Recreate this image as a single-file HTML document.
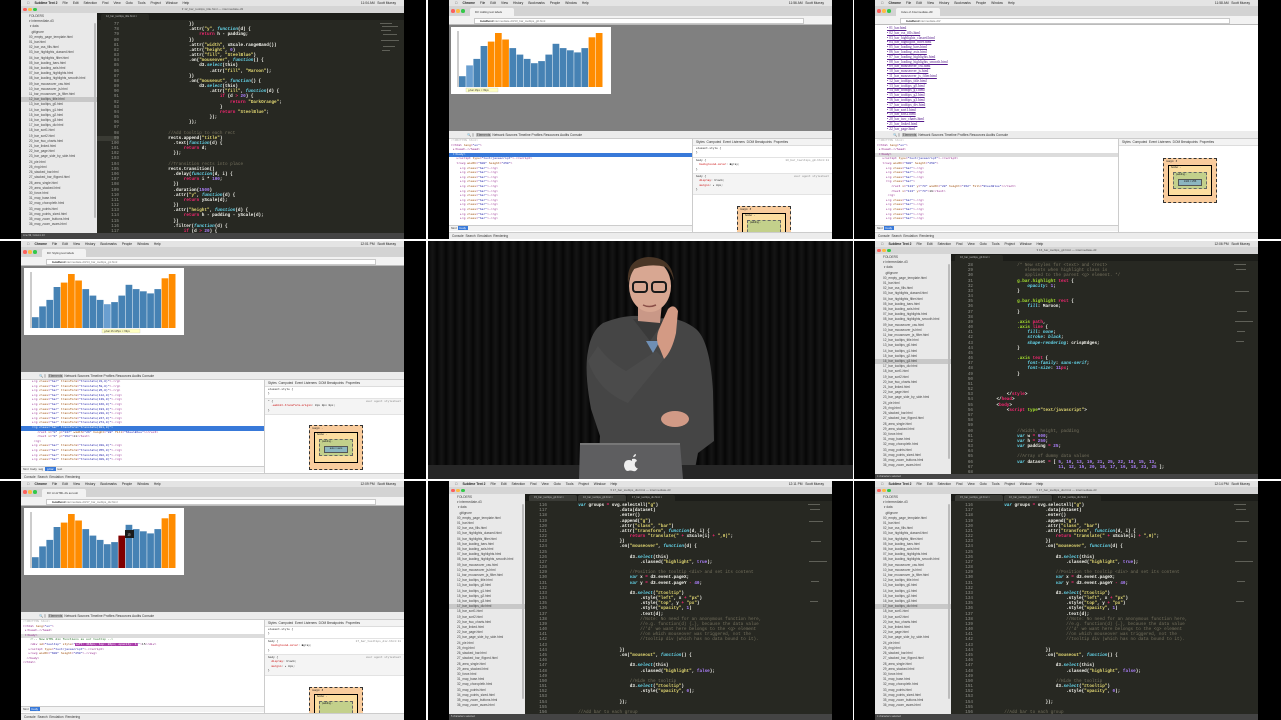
<!DOCTYPE html>
<html><head><meta charset="utf-8">
<style>
*{margin:0;padding:0;box-sizing:border-box}
body{width:1281px;height:720px;background:#fff;position:relative;overflow:hidden;font-family:"Liberation Sans",sans-serif}
.cell{position:absolute;background:#000;overflow:hidden}
.scr{position:absolute;left:21px;top:0;width:383px;height:239px;overflow:hidden}
.mb{position:absolute;left:0;top:0;width:100%;height:6px;background:#e4e4e4;font-size:3.3px;color:#222;line-height:6px;padding-left:6px;white-space:nowrap}
.mb b{margin-right:5px}
.mb span{margin-right:5px}
.mb i{position:absolute;right:8px;font-style:normal}
.tl{position:absolute;top:7.5px;width:3.6px;height:3.6px;border-radius:50%}
/* sublime */
.st{position:absolute;left:0;top:6px;width:100%;height:7px;background:#d5d5d5;font-size:3px;color:#555;text-align:center;line-height:7px}
.sb{position:absolute;left:0;top:13px;width:76px;height:220px;background:#e9e9e9;font-size:3.2px;color:#444;line-height:5.2px;padding-left:8px;white-space:nowrap;padding-top:1px}
.sb .sel{background:#c8c8c8;margin-left:-8px;padding-left:8px}
.sb .scb{position:absolute;right:1px;top:10px;width:2px;height:195px;background:#bbb;border-radius:1px}
.ed{position:absolute;left:76px;top:13px;width:307px;height:220px;background:#272822}
.tabs{position:absolute;left:0;top:0;width:100%;height:7px;background:#1c1d19}
.tab{position:absolute;top:1px;height:6px;width:48px;background:#3a3b36;border-radius:2px 2px 0 0;font-size:2.6px;color:#bbb;line-height:6px;padding-left:5px}
.tab.a{background:#272822}
.code{position:absolute;left:0;top:9px;width:100%;font-family:"Liberation Mono",monospace;font-size:4.3px;line-height:5.17px;color:#f8f8f2;white-space:pre;font-weight:bold}
.code .n{display:inline-block;width:22px;text-align:right;color:#8f908a;font-weight:normal;margin-right:8px}
.hl{background:#3a3b34}
.k{color:#f92672}.s{color:#e6db74}.f{color:#66d9ef;font-style:italic}.m{color:#ae81ff}.c{color:#75715e;font-weight:normal}.g{color:#a6e22e}
.mm{position:absolute;right:0;top:7px;width:26px;height:213px}
.mm div{position:absolute;height:1px;background:#77786f;opacity:.7}
.stb{position:absolute;left:0;top:233px;width:100%;height:6px;background:#444;font-size:2.5px;color:#ccc;line-height:6px;padding-left:2px}
/* chrome */
.ct{position:absolute;left:0;top:6px;width:100%;height:10px;background:#d3d3d3}
.ctab{position:absolute;left:21px;top:2px;height:8px;width:44px;background:#f2f2f2;border-radius:2px 2px 0 0;font-size:2.8px;color:#333;line-height:8px;padding-left:5px}
.ab{position:absolute;left:0;top:16px;width:100%;height:9px;background:#f2f2f2;border-bottom:1px solid #bbb}
.url{position:absolute;left:25px;top:1.5px;width:330px;height:6px;background:#fff;border:1px solid #c9c9c9;font-size:2.9px;line-height:5px;padding-left:5px;color:#777}
.url b{color:#222}
.pg{position:absolute;left:0;top:25px;width:100%;height:106px;background:#808080}
.chart{position:absolute;left:2px;top:2px;width:160px;height:67px;background:#fff}
.dt{position:absolute;left:0;top:131px;width:100%;height:108px;background:#fff}
.dtb{position:absolute;left:0;top:0;width:100%;height:8px;background:#ececec;border-bottom:1px solid #ccc;font-size:3.3px;line-height:8px;padding-left:18px;color:#333;white-space:nowrap}
.dtb .e{background:#c9c9c9;padding:0 1px}
.el{position:absolute;left:0;top:8px;width:243px;height:86px;font-family:"Liberation Mono",monospace;font-size:3px;line-height:4.6px;color:#881280;white-space:pre;padding-left:2px;overflow:hidden}
.el .a{color:#994500}.el .v{color:#1a1aa6}.el .t{color:#222}.el .cm{color:#236e25}
.el .sr{background:#3879d9;color:#fff;display:block;margin-left:-2px;padding-left:2px}
.el .gr{background:#dcdcdc;display:block;margin-left:-2px;padding-left:2px}
.sty{position:absolute;left:243px;top:8px;width:140px;height:100px;border-left:1px solid #ccc;font-family:"Liberation Mono",monospace;font-size:2.8px;color:#222;line-height:4.4px}
.stt{height:7px;background:#f3f3f3;border-bottom:1px solid #ddd;font-family:"Liberation Sans",sans-serif;font-size:3.2px;line-height:7px;padding-left:3px;white-space:nowrap;color:#333}
.rule{padding:1px 3px;border-bottom:1px solid #e3e3e3}
.rule.g2{background:#f4f4f4}
.box{position:absolute;left:44px;width:54px;height:45px;background:#f9cc9d;border:1px dashed #333;font-family:"Liberation Sans",sans-serif;font-size:2.5px;line-height:4px;padding:1px 2px}
.box .b2{position:absolute;left:4px;top:6px;right:4px;bottom:6px;background:#fcdd9f;border:1px solid #000;padding:0 2px}
.box .b3{position:absolute;left:4px;top:6px;right:4px;bottom:6px;background:#c3d08b;border:1px dashed #666;padding:0 2px}
.box .b4{position:absolute;left:4px;top:6px;right:4px;height:7px;background:#8cb6c0;border:1px solid #555;text-align:center}
.fis{position:absolute;left:0;bottom:0;width:100%;height:5px;border-top:1px solid #ddd;font-size:2.7px;color:#aaa;padding-left:3px;line-height:5px;font-family:"Liberation Sans",sans-serif;background:#fff}
.bc{position:absolute;left:0;top:94px;width:243px;height:6px;background:#f3f3f3;border-top:1px solid #ccc;font-size:3px;line-height:5px;padding-left:2px;color:#333}
.bc .on{background:#3879d9;color:#fff;padding:0 2px}
.cn{position:absolute;left:0;top:101px;width:100%;height:7px;background:#ececec;border-top:1px solid #ccc;font-size:3.2px;line-height:6px;padding-left:3px;color:#333}
</style></head><body>

<!-- ============ ROW 1 CELL 1: Sublime ============ -->
<div class="cell" style="left:0;top:0;width:426px;height:239px">
<div class="scr">
<div class="mb"><b>&#63743;</b><b>Sublime Text 2</b><span>File</span><span>Edit</span><span>Selection</span><span>Find</span><span>View</span><span>Goto</span><span>Tools</span><span>Project</span><span>Window</span><span>Help</span><i>11:04 AM &nbsp; Scott Murray</i></div>
<div class="st">▾ 12_bar_tooltips_title.html — intermediate-d3</div>
<div class="tl" style="left:2px;background:#fc605c"></div><div class="tl" style="left:7px;background:#fdbc40"></div><div class="tl" style="left:12px;background:#34c84a"></div>
<div class="sb">FOLDERS<br>▾ intermediate-d3<br>&nbsp;▾ data<br>&nbsp;&nbsp;.gitignore<br>00_empty_page_template.html<br>01_bar.html<br>02_bar_css_fills.html<br>03_bar_highlights_classed.html<br>04_bar_highlights_filter.html<br>05_bar_loading_bars.html<br>06_bar_loading_axis.html<br>07_bar_loading_highlights.html<br>08_bar_loading_highlights_smooth.html<br>09_bar_mouseover_css.html<br>10_bar_mouseover_js.html<br>11_bar_mouseover_js_filter.html<br><div class="sel">12_bar_tooltips_title.html</div>13_bar_tooltips_g0.html<br>14_bar_tooltips_g1.html<br>15_bar_tooltips_g2.html<br>16_bar_tooltips_g3.html<br>17_bar_tooltips_div.html<br>18_bar_sort1.html<br>19_bar_sort2.html<br>20_bar_two_charts.html<br>21_bar_linked.html<br>22_bar_page.html<br>23_bar_page_side_by_side.html<br>24_pie.html<br>25_ring.html<br>26_stacked_bar.html<br>27_stacked_bar_flipped.html<br>28_area_single.html<br>29_area_stacked.html<br>30_force.html<br>31_map_base.html<br>32_map_choropleth.html<br>33_map_points.html<br>34_map_points_sized.html<br>35_map_zoom_buttons.html<br>36_map_zoom_avars.html<div class="scb"></div></div>
<div class="ed"><div class="tabs"><div class="tab a" style="left:4px">12_bar_tooltips_title.html ×</div></div>
<div class="code"><span class="n">77</span>                        })
<span class="n">78</span>                        .attr(<span class="s">"y"</span>, <span class="f">function</span>(d) {
<span class="n">79</span>                            <span class="k">return</span> h - padding;
<span class="n">80</span>                        })
<span class="n">81</span>                        .attr(<span class="s">"width"</span>, xScale.rangeBand())
<span class="n">82</span>                        .attr(<span class="s">"height"</span>, <span class="m">0</span>)
<span class="n">83</span>                        .attr(<span class="s">"fill"</span>, <span class="s">"SteelBlue"</span>)
<span class="n">84</span>                        .on(<span class="s">"mouseover"</span>, <span class="f">function</span>() {
<span class="n">85</span>                            d3.<span class="f">select</span>(this)
<span class="n">86</span>                                .attr(<span class="s">"fill"</span>, <span class="s">"Maroon"</span>);
<span class="n">87</span>                        })
<span class="n">88</span>                        .on(<span class="s">"mouseout"</span>, <span class="f">function</span>() {
<span class="n">89</span>                            d3.<span class="f">select</span>(this)
<span class="n">90</span>                                .attr(<span class="s">"fill"</span>, <span class="f">function</span>(d) {
<span class="n">91</span>                                    <span class="k">if</span> (d <span class="k">&gt;</span> <span class="m">20</span>) {
<span class="n">92</span>                                        <span class="k">return</span> <span class="s">"DarkOrange"</span>;
<span class="n">93</span>                                    }
<span class="n">94</span>                                    <span class="k">return</span> <span class="s">"SteelBlue"</span>;
<span class="n">95</span>                                });
<span class="n">96</span>                        });
<span class="n">97</span>
<span class="n">98</span>                <span class="c">//Add tooltip to each rect</span>
<span class="n hl">99</span>                rects.append(<span class="s">"title"</span>)
<span class="n">100</span>                  .text(<span class="f">function</span>(d) {
<span class="n">101</span>                      <span class="k">return</span> d;
<span class="n">102</span>                  });
<span class="n">103</span>
<span class="n">104</span>                <span class="c">//Transition rects into place</span>
<span class="n">105</span>                rects.transition()
<span class="n">106</span>                  .delay(<span class="f">function</span>(d, i) {
<span class="n">107</span>                      <span class="k">return</span> i * <span class="m">100</span>;
<span class="n">108</span>                  })
<span class="n">109</span>                  .duration(<span class="m">1500</span>)
<span class="n">110</span>                  .attr(<span class="s">"y"</span>, <span class="f">function</span>(d) {
<span class="n">111</span>                      <span class="k">return</span> yScale(d);
<span class="n">112</span>                  })
<span class="n">113</span>                  .attr(<span class="s">"height"</span>, <span class="f">function</span>(d) {
<span class="n">114</span>                      <span class="k">return</span> h - padding - yScale(d);
<span class="n">115</span>                  })
<span class="n">116</span>                  .filter(<span class="f">function</span>(d) {
<span class="n">117</span>                      <span class="k">if</span> (d <span class="k">&gt;</span> <span class="m">20</span>) {
<span class="n">118</span>                          <span class="k">return</span> <span class="s">true</span>;</div>
<div class="mm"><div style="top:3px;left:2px;width:12px"></div><div style="top:6px;left:4px;width:16px"></div><div style="top:10px;left:3px;width:10px"></div><div style="top:14px;left:5px;width:14px"></div><div style="top:20px;left:3px;width:18px"></div><div style="top:26px;left:5px;width:12px"></div><div style="top:30px;left:4px;width:8px"></div></div>
</div>
<div class="stb">Line 99, Column 13</div>
</div></div>

<!-- ============ ROW 1 CELL 2: Chrome chart ============ -->
<div class="cell" style="left:428px;top:0;width:425px;height:239px">
<div class="scr">
<div class="mb"><b>&#63743;</b><b>Chrome</b><span>File</span><span>Edit</span><span>View</span><span>History</span><span>Bookmarks</span><span>People</span><span>Window</span><span>Help</span><i>11:56 AM &nbsp; Scott Murray</i></div>
<div class="ct"><div class="ctab">D3: Adding text labels</div></div>
<div class="tl" style="left:2px;top:9px;background:#fc605c"></div><div class="tl" style="left:7px;top:9px;background:#fdbc40"></div><div class="tl" style="left:12px;top:9px;background:#34c84a"></div>
<div class="ab"><div class="url"><b>localhost</b>/intermediate-d3/13_bar_tooltips_g0.html</div></div>
<div class="pg"><div class="chart">
<svg width="160" height="67" viewBox="0 0 160 67"><line x1="7" y1="4" x2="7" y2="60" stroke="#000" stroke-width=".4"/>
<g fill="#4682b4"><rect x="8" y="49.2" width="6.7" height="10.8"/><rect x="15.2" y="38.4" width="6.7" height="21.6" fill="#6a9fd0"/><rect x="22.4" y="31.9" width="6.7" height="28.1"/><rect x="29.6" y="19" width="6.7" height="41"/><rect x="36.8" y="14.6" width="6.7" height="45.4" fill="#ff8c00"/><rect x="44" y="6" width="6.7" height="54" fill="#ff8c00"/><rect x="51.2" y="12.5" width="6.7" height="47.5" fill="#ff8c00"/><rect x="58.4" y="21.1" width="6.7" height="38.9"/><rect x="65.6" y="27.6" width="6.7" height="32.4"/><rect x="72.8" y="31.9" width="6.7" height="28.1"/><rect x="80" y="36.2" width="6.7" height="23.8"/><rect x="87.2" y="34.1" width="6.7" height="25.9"/><rect x="94.4" y="27.6" width="6.7" height="32.4"/><rect x="101.6" y="16.8" width="6.7" height="43.2"/><rect x="108.8" y="21.1" width="6.7" height="38.9"/><rect x="116" y="23.3" width="6.7" height="36.7"/><rect x="123.2" y="25.4" width="6.7" height="34.6"/><rect x="130.4" y="21.1" width="6.7" height="38.9"/><rect x="137.6" y="10.3" width="6.7" height="49.7" fill="#ff8c00"/><rect x="144.8" y="6" width="6.7" height="54" fill="#ff8c00"/></g>
<rect x="15" y="61" width="32" height="4" fill="#ffffc0" stroke="#bbb" stroke-width=".3"/><text x="17" y="64" font-size="2.6" fill="#333">g.bar 26px × 99px</text></svg>
</div></div>
<div class="dt"><div class="dtb">🔍 ▯ &nbsp;<span class="e">Elements</span> Network Sources Timeline Profiles Resources Audits Console</div>
<div class="el"><span style="color:#aaa">&lt;!DOCTYPE html&gt;</span>
▾&lt;html <span class="a">lang</span>=<span class="v">"en"</span>&gt;
 ▸&lt;head&gt;…&lt;/head&gt;
<span class="sr"> ▾&lt;body&gt;</span>   ▸&lt;script <span class="a">type</span>=<span class="v">"text/javascript"</span>&gt;…&lt;/script&gt;
   ▾&lt;svg <span class="a">width</span>=<span class="v">"600"</span> <span class="a">height</span>=<span class="v">"250"</span>&gt;
     ▸&lt;g <span class="a">class</span>=<span class="v">"bar"</span>&gt;…&lt;/g&gt;
     ▸&lt;g <span class="a">class</span>=<span class="v">"bar"</span>&gt;…&lt;/g&gt;
     ▸&lt;g <span class="a">class</span>=<span class="v">"bar"</span>&gt;…&lt;/g&gt;
     ▸&lt;g <span class="a">class</span>=<span class="v">"bar"</span>&gt;…&lt;/g&gt;
     ▸&lt;g <span class="a">class</span>=<span class="v">"bar"</span>&gt;…&lt;/g&gt;
     ▸&lt;g <span class="a">class</span>=<span class="v">"bar"</span>&gt;…&lt;/g&gt;
     ▸&lt;g <span class="a">class</span>=<span class="v">"bar"</span>&gt;…&lt;/g&gt;
     ▸&lt;g <span class="a">class</span>=<span class="v">"bar"</span>&gt;…&lt;/g&gt;
     ▸&lt;g <span class="a">class</span>=<span class="v">"bar"</span>&gt;…&lt;/g&gt;
     ▸&lt;g <span class="a">class</span>=<span class="v">"bar"</span>&gt;…&lt;/g&gt;
     ▸&lt;g <span class="a">class</span>=<span class="v">"bar"</span>&gt;…&lt;/g&gt;
     ▸&lt;g <span class="a">class</span>=<span class="v">"bar"</span>&gt;…&lt;/g&gt;</div>
<div class="bc">html <span class="on">body</span></div>
<div class="sty"><div class="stt">Styles &nbsp;Computed &nbsp;Event Listeners &nbsp;DOM Breakpoints &nbsp;Properties</div>
<div class="rule">element.style {<br>}</div>
<div class="rule">body { <span style="float:right;color:#888">13_bar_tooltips_g0.html:11</span><br>&nbsp; <span style="color:#c80000">background-color</span>: ■gray;<br>}</div>
<div class="rule g2">body { <span style="float:right;color:#888">user agent stylesheet</span><br>&nbsp; <span style="color:#c80000">display</span>: block;<br>&nbsp; <span style="color:#c80000">margin</span>: ▸ 8px;<br>}</div>
<div class="box" style="top:67px">margin &nbsp; 8<div class="b2">border &nbsp; -<div class="b3">padding -</div></div></div>
<div class="fis">Find in Styles</div></div>
<div class="cn">Console &nbsp;Search &nbsp;Emulation &nbsp;Rendering</div>
</div></div></div>

<!-- ============ ROW 1 CELL 3: Chrome index ============ -->
<div class="cell" style="left:854px;top:0;width:427px;height:239px">
<div class="scr">
<div class="mb"><b>&#63743;</b><b>Chrome</b><span>File</span><span>Edit</span><span>View</span><span>History</span><span>Bookmarks</span><span>People</span><span>Window</span><span>Help</span><i>11:58 AM &nbsp; Scott Murray</i></div>
<div class="ct"><div class="ctab">Index of /intermediate-d3/</div></div>
<div class="tl" style="left:2px;top:9px;background:#fc605c"></div><div class="tl" style="left:7px;top:9px;background:#fdbc40"></div><div class="tl" style="left:12px;top:9px;background:#34c84a"></div>
<div class="ab"><div class="url"><b>localhost</b>/intermediate-d3/</div></div>
<div class="pg" style="background:#fff;font-family:'Liberation Serif',serif;font-size:3.6px;line-height:4.8px;color:#551a8b;padding:1px 0 0 12px">
<div style="text-decoration:underline">• 01_bar.html<br>• 02_bar_css_fills.html<br>• 03_bar_highlights_classed.html<br>• 04_bar_highlights_filter.html<br>• 05_bar_loading_bars.html<br>• 06_bar_loading_axis.html<br>• 07_bar_loading_highlights.html<br>• 08_bar_loading_highlights_smooth.html<br>• 09_bar_mouseover_css.html<br>• 10_bar_mouseover_js.html<br>• 11_bar_mouseover_js_filter.html<br>• 12_bar_tooltips_title.html<br>• 13_bar_tooltips_g0.html<br>• 14_bar_tooltips_g1.html<br>• 15_bar_tooltips_g2.html<br>• 16_bar_tooltips_g3.html<br>• 17_bar_tooltips_div.html<br>• 18_bar_sort1.html<br>• 19_bar_sort2.html<br>• 20_bar_two_charts.html<br>• 21_bar_linked.html<br>• 22_bar_page.html</div></div>
<div class="dt"><div class="dtb">🔍 ▯ &nbsp;<span class="e">Elements</span> Network Sources Timeline Profiles Resources Audits Console</div>
<div class="el"><span style="color:#aaa">&lt;!DOCTYPE html&gt;</span>
▾&lt;html <span class="a">lang</span>=<span class="v">"en"</span>&gt;
 ▸&lt;head&gt;…&lt;/head&gt;
<span class="gr"> ▾&lt;body&gt;</span>   ▸&lt;script <span class="a">type</span>=<span class="v">"text/javascript"</span>&gt;…&lt;/script&gt;
   ▾&lt;svg <span class="a">width</span>=<span class="v">"600"</span> <span class="a">height</span>=<span class="v">"250"</span>&gt;
     ▸&lt;g <span class="a">class</span>=<span class="v">"bar"</span>&gt;…&lt;/g&gt;
     ▸&lt;g <span class="a">class</span>=<span class="v">"bar"</span>&gt;…&lt;/g&gt;
     ▸&lt;g <span class="a">class</span>=<span class="v">"bar"</span>&gt;…&lt;/g&gt;
     ▾&lt;g <span class="a">class</span>=<span class="v">"bar"</span>&gt;
        &lt;rect <span class="a">x</span>=<span class="v">"113"</span> <span class="a">y</span>=<span class="v">"73"</span> <span class="a">width</span>=<span class="v">"20"</span> <span class="a">height</span>=<span class="v">"152"</span> <span class="a">fill</span>=<span class="v">"SteelBlue"</span>&gt;&lt;/rect&gt;
        &lt;text <span class="a">x</span>=<span class="v">"113"</span> <span class="a">y</span>=<span class="v">"73"</span>&gt;<span class="t">19</span>&lt;/text&gt;
      &lt;/g&gt;
     ▸&lt;g <span class="a">class</span>=<span class="v">"bar"</span>&gt;…&lt;/g&gt;
     ▸&lt;g <span class="a">class</span>=<span class="v">"bar"</span>&gt;…&lt;/g&gt;
     ▸&lt;g <span class="a">class</span>=<span class="v">"bar"</span>&gt;…&lt;/g&gt;
     ▸&lt;g <span class="a">class</span>=<span class="v">"bar"</span>&gt;…&lt;/g&gt;
     ▸&lt;g <span class="a">class</span>=<span class="v">"bar"</span>&gt;…&lt;/g&gt;</div>
<div class="bc">html <span class="on">body</span></div>
<div class="sty"><div class="stt">Styles &nbsp;Computed &nbsp;Event Listeners &nbsp;DOM Breakpoints &nbsp;Properties</div>
<div class="box" style="top:19px">margin &nbsp; 8<div class="b2">border &nbsp; -<div class="b3">padding -<div class="b4">1424 × 256</div></div></div></div>
<div class="fis">Find in Styles</div></div>
<div class="cn">Console &nbsp;Search &nbsp;Emulation &nbsp;Rendering</div>
</div></div></div>

<!-- ============ ROW 2 CELL 1: Chrome chart g1 ============ -->
<div class="cell" style="left:0;top:241px;width:426px;height:238px">
<div class="scr">
<div class="mb"><b>&#63743;</b><b>Chrome</b><span>File</span><span>Edit</span><span>View</span><span>History</span><span>Bookmarks</span><span>People</span><span>Window</span><span>Help</span><i>12:01 PM &nbsp; Scott Murray</i></div>
<div class="ct"><div class="ctab">D3: Styling text labels</div></div>
<div class="tl" style="left:2px;top:9px;background:#fc605c"></div><div class="tl" style="left:7px;top:9px;background:#fdbc40"></div><div class="tl" style="left:12px;top:9px;background:#34c84a"></div>
<div class="ab"><div class="url"><b>localhost</b>/intermediate-d3/14_bar_tooltips_g1.html</div></div>
<div class="pg"><div class="chart" style="left:3px">
<svg width="160" height="67" viewBox="0 0 160 67"><line x1="7" y1="4" x2="7" y2="60" stroke="#000" stroke-width=".4"/>
<g fill="#4682b4"><rect x="8" y="49.2" width="6.7" height="10.8"/><rect x="15.2" y="38.4" width="6.7" height="21.6"/><rect x="22.4" y="31.9" width="6.7" height="28.1"/><rect x="29.6" y="19" width="6.7" height="41"/><rect x="36.8" y="14.6" width="6.7" height="45.4" fill="#ff8c00"/><rect x="44" y="6" width="6.7" height="54" fill="#ff8c00"/><rect x="51.2" y="12.5" width="6.7" height="47.5" fill="#ff8c00"/><rect x="58.4" y="21.1" width="6.7" height="38.9"/><rect x="65.6" y="27.6" width="6.7" height="32.4"/><rect x="72.8" y="31.9" width="6.7" height="28.1"/><rect x="80" y="36.2" width="6.7" height="23.8" fill="#6a9fd0"/><rect x="87.2" y="34.1" width="6.7" height="25.9"/><rect x="94.4" y="27.6" width="6.7" height="32.4"/><rect x="101.6" y="16.8" width="6.7" height="43.2"/><rect x="108.8" y="21.1" width="6.7" height="38.9"/><rect x="116" y="23.3" width="6.7" height="36.7"/><rect x="123.2" y="25.4" width="6.7" height="34.6"/><rect x="130.4" y="21.1" width="6.7" height="38.9"/><rect x="137.6" y="10.3" width="6.7" height="49.7" fill="#ff8c00"/><rect x="144.8" y="6" width="6.7" height="54" fill="#ff8c00"/></g>
<rect x="78" y="61" width="38" height="4" fill="#ffffc0" stroke="#bbb" stroke-width=".3"/><text x="80" y="64" font-size="2.6" fill="#333">g.bar 26.125px × 99px</text></svg>
</div></div>
<div class="dt"><div class="dtb">🔍 ▯ &nbsp;<span class="e">Elements</span> Network Sources Timeline Profiles Resources Audits Console</div>
<div class="el">     ▸&lt;g <span class="a">class</span>=<span class="v">"bar"</span> <span class="a">transform</span>=<span class="v">"translate(31,0)"</span>&gt;…&lt;/g&gt;
     ▸&lt;g <span class="a">class</span>=<span class="v">"bar"</span> <span class="a">transform</span>=<span class="v">"translate(58,0)"</span>&gt;…&lt;/g&gt;
     ▸&lt;g <span class="a">class</span>=<span class="v">"bar"</span> <span class="a">transform</span>=<span class="v">"translate(85,0)"</span>&gt;…&lt;/g&gt;
     ▸&lt;g <span class="a">class</span>=<span class="v">"bar"</span> <span class="a">transform</span>=<span class="v">"translate(112,0)"</span>&gt;…&lt;/g&gt;
     ▸&lt;g <span class="a">class</span>=<span class="v">"bar"</span> <span class="a">transform</span>=<span class="v">"translate(139,0)"</span>&gt;…&lt;/g&gt;
     ▸&lt;g <span class="a">class</span>=<span class="v">"bar"</span> <span class="a">transform</span>=<span class="v">"translate(166,0)"</span>&gt;…&lt;/g&gt;
     ▸&lt;g <span class="a">class</span>=<span class="v">"bar"</span> <span class="a">transform</span>=<span class="v">"translate(193,0)"</span>&gt;…&lt;/g&gt;
     ▸&lt;g <span class="a">class</span>=<span class="v">"bar"</span> <span class="a">transform</span>=<span class="v">"translate(220,0)"</span>&gt;…&lt;/g&gt;
     ▸&lt;g <span class="a">class</span>=<span class="v">"bar"</span> <span class="a">transform</span>=<span class="v">"translate(247,0)"</span>&gt;…&lt;/g&gt;
     ▸&lt;g <span class="a">class</span>=<span class="v">"bar"</span> <span class="a">transform</span>=<span class="v">"translate(274,0)"</span>&gt;…&lt;/g&gt;
<span class="sr">     ▾&lt;g class="bar" transform="translate(301,0)"&gt;</span>        &lt;rect <span class="a">x</span>=<span class="v">"0"</span> <span class="a">y</span>=<span class="v">"137"</span> <span class="a">width</span>=<span class="v">"26"</span> <span class="a">height</span>=<span class="v">"88"</span> <span class="a">fill</span>=<span class="v">"SteelBlue"</span>&gt;&lt;/rect&gt;
        &lt;text <span class="a">x</span>=<span class="v">"0"</span> <span class="a">y</span>=<span class="v">"152"</span>&gt;<span class="t">11</span>&lt;/text&gt;
      &lt;/g&gt;
     ▸&lt;g <span class="a">class</span>=<span class="v">"bar"</span> <span class="a">transform</span>=<span class="v">"translate(328,0)"</span>&gt;…&lt;/g&gt;
     ▸&lt;g <span class="a">class</span>=<span class="v">"bar"</span> <span class="a">transform</span>=<span class="v">"translate(355,0)"</span>&gt;…&lt;/g&gt;
     ▸&lt;g <span class="a">class</span>=<span class="v">"bar"</span> <span class="a">transform</span>=<span class="v">"translate(382,0)"</span>&gt;…&lt;/g&gt;
     ▸&lt;g <span class="a">class</span>=<span class="v">"bar"</span> <span class="a">transform</span>=<span class="v">"translate(409,0)"</span>&gt;…&lt;/g&gt;</div>
<div class="bc">html &nbsp;body &nbsp;svg &nbsp;<span class="on">g.bar</span> &nbsp;text</div>
<div class="sty"><div class="stt">Styles &nbsp;Computed &nbsp;Event Listeners &nbsp;DOM Breakpoints &nbsp;Properties</div>
<div class="rule">element.style {<br>}</div>
<div class="rule g2">* { <span style="float:right;color:#888">user agent stylesheet</span><br>&nbsp; <span style="color:#c80000">-webkit-transform-origin</span>: 0px 0px 0px;<br>}</div>
<div class="box" style="top:45px">margin &nbsp; -<div class="b2">border &nbsp; -<div class="b3">padding -<div class="b4">auto × auto</div></div></div></div>
<div class="fis">Find in Styles</div></div>
<div class="cn">Console &nbsp;Search &nbsp;Emulation &nbsp;Rendering</div>
</div></div></div>

<!-- ============ ROW 2 CELL 2: Video ============ -->
<div class="cell" style="left:428px;top:241px;width:425px;height:238px;background:#0b0b0b">
<svg width="425" height="238" viewBox="0 0 425 238">
<defs><linearGradient id="cur" x1="0" x2="1" y1="0" y2="0" spreadMethod="repeat">
<stop offset="0" stop-color="#070707"/><stop offset=".5" stop-color="#151515"/><stop offset="1" stop-color="#070707"/></linearGradient>
<pattern id="st" width="9" height="238" patternUnits="userSpaceOnUse"><rect width="9" height="238" fill="url(#cur)"/></pattern></defs>
<rect width="425" height="238" fill="url(#st)"/>
<!-- torso -->
<path d="M175 82 Q200 72 218 76 L228 78 Q250 74 268 88 Q282 100 285 150 L286 200 L270 212 L265 238 L170 238 L172 195 L163 168 Q156 130 160 110 Q163 90 175 82Z" fill="#454545"/>
<path d="M205 78 L222 100 L236 80 Z" fill="#3a3a3a"/>
<path d="M218 100 L225 112 L232 100 Z" fill="#6f8fb5"/>
<!-- neck -->
<path d="M210 60 L210 80 L232 82 L234 62Z" fill="#c99887"/>
<!-- head -->
<ellipse cx="222" cy="45" rx="21" ry="26" fill="#d8a792"/>
<path d="M200 42 Q198 18 220 16 Q244 16 246 40 Q243 30 238 26 Q222 22 206 28 Q202 34 200 42Z" fill="#4a3626"/>
<rect x="205" y="41" width="14" height="10" rx="3" fill="none" stroke="#1a1a1a" stroke-width="2"/>
<rect x="224" y="41" width="14" height="10" rx="3" fill="none" stroke="#1a1a1a" stroke-width="2"/>
<path d="M215 64 Q221 67 228 64" stroke="#8a4f48" stroke-width="1.5" fill="none"/>
<!-- raised hand -->
<path d="M232 108 Q226 98 232 86 L240 68 Q246 62 250 70 L248 92 Q244 110 236 118Z" fill="#d39a84"/>
<path d="M160 120 Q170 150 200 162 L236 118 L228 110 L198 130 Q180 120 170 105Z" fill="#4b4b4b"/>
<!-- lower hand -->
<ellipse cx="247" cy="178" rx="14" ry="8" fill="#d19a86"/>
<!-- table -->
<rect x="0" y="224" width="425" height="14" fill="#262626"/>
<!-- laptop -->
<path d="M152 203 L252 203 L255 238 L151 238Z" fill="#5e5e60"/>
<rect x="152" y="202" width="100" height="2" fill="#777"/>
<path d="M204 218 q4 -1 5 2 q-3 1 -2 5 q2 3 3 2 q-2 4 -5 3 q-3 -1 -5 0 q-3 0 -4 -5 q0 -6 5 -6 q2 0 3 1Z M205 216 q1 -3 3 -3 q0 3 -3 3Z" fill="#eee"/>
</svg>
</div>

<!-- ============ ROW 2 CELL 3: Sublime CSS ============ -->
<div class="cell" style="left:854px;top:241px;width:427px;height:238px">
<div class="scr">
<div class="mb"><b>&#63743;</b><b>Sublime Text 2</b><span>File</span><span>Edit</span><span>Selection</span><span>Find</span><span>View</span><span>Goto</span><span>Tools</span><span>Project</span><span>Window</span><span>Help</span><i>12:06 PM &nbsp; Scott Murray</i></div>
<div class="st">▾ 16_bar_tooltips_g3.html — intermediate-d3</div>
<div class="tl" style="left:2px;background:#fc605c"></div><div class="tl" style="left:7px;background:#fdbc40"></div><div class="tl" style="left:12px;background:#34c84a"></div>
<div class="sb">FOLDERS<br>▾ intermediate-d3<br>&nbsp;▾ data<br>&nbsp;&nbsp;.gitignore<br>00_empty_page_template.html<br>01_bar.html<br>02_bar_css_fills.html<br>03_bar_highlights_classed.html<br>04_bar_highlights_filter.html<br>05_bar_loading_bars.html<br>06_bar_loading_axis.html<br>07_bar_loading_highlights.html<br>08_bar_loading_highlights_smooth.html<br>09_bar_mouseover_css.html<br>10_bar_mouseover_js.html<br>11_bar_mouseover_js_filter.html<br>12_bar_tooltips_title.html<br>13_bar_tooltips_g0.html<br>14_bar_tooltips_g1.html<br>15_bar_tooltips_g2.html<br><div class="sel">16_bar_tooltips_g3.html</div>17_bar_tooltips_div.html<br>18_bar_sort1.html<br>19_bar_sort2.html<br>20_bar_two_charts.html<br>21_bar_linked.html<br>22_bar_page.html<br>23_bar_page_side_by_side.html<br>24_pie.html<br>25_ring.html<br>26_stacked_bar.html<br>27_stacked_bar_flipped.html<br>28_area_single.html<br>29_area_stacked.html<br>30_force.html<br>31_map_base.html<br>32_map_choropleth.html<br>33_map_points.html<br>34_map_points_sized.html<br>35_map_zoom_buttons.html<br>36_map_zoom_avars.html<div class="scb"></div></div>
<div class="ed"><div class="tabs"><div class="tab a" style="left:4px">16_bar_tooltips_g3.html ×</div></div>
<div class="code"><span class="n">28</span>              <span class="c">/* New styles for &lt;text&gt; and &lt;rect&gt;</span>
<span class="n">29</span>              <span class="c">   elements when highlight class is</span>
<span class="n">30</span>              <span class="c">   applied to the parent &lt;g&gt; element. */</span>
<span class="n">31</span>              <span class="g">g.bar.highlight</span> <span class="k">text</span> {
<span class="n">32</span>                  <span class="f">opacity</span>: <span class="m">1</span>;
<span class="n">33</span>              }
<span class="n">34</span>
<span class="n">35</span>              <span class="g">g.bar.highlight</span> <span class="k">rect</span> {
<span class="n">36</span>                  <span class="f">fill</span>: Maroon;
<span class="n">37</span>              }
<span class="n">38</span>
<span class="n">39</span>              <span class="g">.axis</span> <span class="k">path</span>,
<span class="n">40</span>              <span class="g">.axis</span> <span class="k">line</span> {
<span class="n">41</span>                  <span class="f">fill</span>: <span class="f">none</span>;
<span class="n">42</span>                  <span class="f">stroke</span>: <span class="f">black</span>;
<span class="n">43</span>                  <span class="f">shape-rendering</span>: crispEdges;
<span class="n">44</span>              }
<span class="n">45</span>
<span class="n">46</span>              <span class="g">.axis</span> <span class="k">text</span> {
<span class="n">47</span>                  <span class="f">font-family</span>: <span class="f">sans-serif</span>;
<span class="n">48</span>                  <span class="f">font-size</span>: <span class="m">11</span><span class="k">px</span>;
<span class="n">49</span>              }
<span class="n">50</span>
<span class="n">51</span>
<span class="n">52</span>
<span class="n">53</span>          &lt;/<span class="k">style</span>&gt;
<span class="n">54</span>      &lt;/<span class="k">head</span>&gt;
<span class="n">55</span>      &lt;<span class="k">body</span>&gt;
<span class="n">56</span>          &lt;<span class="k">script</span> <span class="g">type</span>=<span class="s">"text/javascript"</span>&gt;
<span class="n">57</span>
<span class="n">58</span>
<span class="n">59</span>
<span class="n">60</span>              <span class="c">//Width, height, padding</span>
<span class="n">61</span>              <span class="f">var</span> w <span class="k">=</span> <span class="m">600</span>;
<span class="n">62</span>              <span class="f">var</span> h <span class="k">=</span> <span class="m">250</span>;
<span class="n">63</span>              <span class="f">var</span> padding <span class="k">=</span> <span class="m">25</span>;
<span class="n">64</span>
<span class="n">65</span>              <span class="c">//Array of dummy data values</span>
<span class="n">66</span>              <span class="f">var</span> dataset <span class="k">=</span> [ <span class="m">5</span>, <span class="m">10</span>, <span class="m">13</span>, <span class="m">19</span>, <span class="m">21</span>, <span class="m">25</span>, <span class="m">22</span>, <span class="m">18</span>, <span class="m">15</span>, <span class="m">13</span>,
<span class="n">67</span>                              <span class="m">11</span>, <span class="m">12</span>, <span class="m">15</span>, <span class="m">20</span>, <span class="m">18</span>, <span class="m">17</span>, <span class="m">16</span>, <span class="m">18</span>, <span class="m">23</span>, <span class="m">25</span> ];
<span class="n">68</span></div>
<div class="mm"><div style="top:3px;left:2px;width:12px"></div><div style="top:8px;left:4px;width:10px"></div><div style="top:30px;left:3px;width:14px"></div><div style="top:50px;left:5px;width:10px"></div><div style="top:60px;left:3px;width:18px"></div><div style="top:70px;left:5px;width:8px"></div><div style="top:80px;left:4px;width:8px"></div></div>
</div>
<div class="stb">4 characters selected</div>
</div></div>

<!-- ============ ROW 3 CELL 1: Chrome div tooltip ============ -->
<div class="cell" style="left:0;top:481px;width:426px;height:239px">
<div class="scr">
<div class="mb"><b>&#63743;</b><b>Chrome</b><span>File</span><span>Edit</span><span>View</span><span>History</span><span>Bookmarks</span><span>People</span><span>Window</span><span>Help</span><i>12:09 PM &nbsp; Scott Murray</i></div>
<div class="ct"><div class="ctab">D3: An HTML div as toolt</div></div>
<div class="tl" style="left:2px;top:9px;background:#fc605c"></div><div class="tl" style="left:7px;top:9px;background:#fdbc40"></div><div class="tl" style="left:12px;top:9px;background:#34c84a"></div>
<div class="ab"><div class="url"><b>localhost</b>/intermediate-d3/17_bar_tooltips_div.html</div></div>
<div class="pg"><div class="chart" style="left:3px">
<svg width="160" height="67" viewBox="0 0 160 67"><line x1="7" y1="4" x2="7" y2="60" stroke="#000" stroke-width=".4"/>
<g fill="#4682b4"><rect x="8" y="49.2" width="6.7" height="10.8"/><rect x="15.2" y="38.4" width="6.7" height="21.6"/><rect x="22.4" y="31.9" width="6.7" height="28.1"/><rect x="29.6" y="19" width="6.7" height="41"/><rect x="36.8" y="14.6" width="6.7" height="45.4" fill="#ff8c00"/><rect x="44" y="6" width="6.7" height="54" fill="#ff8c00"/><rect x="51.2" y="12.5" width="6.7" height="47.5" fill="#ff8c00"/><rect x="58.4" y="21.1" width="6.7" height="38.9"/><rect x="65.6" y="27.6" width="6.7" height="32.4"/><rect x="72.8" y="31.9" width="6.7" height="28.1"/><rect x="80" y="36.2" width="6.7" height="23.8"/><rect x="87.2" y="34.1" width="6.7" height="25.9"/><rect x="94.4" y="27.6" width="6.7" height="32.4" fill="#800000"/><rect x="101.6" y="16.8" width="6.7" height="43.2"/><rect x="108.8" y="21.1" width="6.7" height="38.9"/><rect x="116" y="23.3" width="6.7" height="36.7"/><rect x="123.2" y="25.4" width="6.7" height="34.6"/><rect x="130.4" y="21.1" width="6.7" height="38.9"/><rect x="137.6" y="10.3" width="6.7" height="49.7" fill="#ff8c00"/><rect x="144.8" y="6" width="6.7" height="54" fill="#ff8c00"/></g>
<rect x="101" y="22" width="9" height="8" fill="#1a1a1a"/><text x="103.5" y="27.3" font-size="2.8" fill="#fff">15</text></svg>
</div></div>
<div class="dt"><div class="dtb">🔍 ▯ &nbsp;<span class="e">Elements</span> Network Sources Timeline Profiles Resources Audits Console</div>
<div class="el"><span style="color:#aaa">&lt;!DOCTYPE html&gt;</span>
▾&lt;html <span class="a">lang</span>=<span class="v">"en"</span>&gt;
 ▸&lt;head&gt;…&lt;/head&gt;
<span class="gr"> ▾&lt;body&gt;</span>    <span class="cm">&lt;!-- New HTML div functions as our tooltip --&gt;</span>
    &lt;div <span class="a">id</span>=<span class="v">"tooltip"</span> <span class="a">style</span>=<span class="v">"<span style="background:#a83aa8;color:#fff">left: 416px; top: 86px; opacity: 1;</span>"</span>&gt;<span class="t">15</span>&lt;/div&gt;
   ▸&lt;script <span class="a">type</span>=<span class="v">"text/javascript"</span>&gt;…&lt;/script&gt;
   ▸&lt;svg <span class="a">width</span>=<span class="v">"600"</span> <span class="a">height</span>=<span class="v">"250"</span>&gt;…&lt;/svg&gt;
  &lt;/body&gt;
&lt;/html&gt;</div>
<div class="bc">html <span class="on">body</span></div>
<div class="sty"><div class="stt">Styles &nbsp;Computed &nbsp;Event Listeners &nbsp;DOM Breakpoints &nbsp;Properties</div>
<div class="rule">element.style {<br>}</div>
<div class="rule">body { <span style="float:right;color:#888">17_bar_tooltips_div.html:11</span><br>&nbsp; <span style="color:#c80000">background-color</span>: ■gray;<br>}</div>
<div class="rule g2">body { <span style="float:right;color:#888">user agent stylesheet</span><br>&nbsp; <span style="color:#c80000">display</span>: block;<br>&nbsp; <span style="color:#c80000">margin</span>: ▸ 8px;<br>}</div>
<div class="box" style="top:67px">margin &nbsp; 8<div class="b2">border &nbsp; -<div class="b3">padding -</div></div></div>
<div class="fis">Find in Styles</div></div>
<div class="cn">Console &nbsp;Search &nbsp;Emulation &nbsp;Rendering</div>
</div></div></div>

<!-- ============ ROW 3 CELL 2: Sublime JS ============ -->
<div class="cell" style="left:428px;top:481px;width:425px;height:239px">
<div class="scr">
<div class="mb"><b>&#63743;</b><b>Sublime Text 2</b><span>File</span><span>Edit</span><span>Selection</span><span>Find</span><span>View</span><span>Goto</span><span>Tools</span><span>Project</span><span>Window</span><span>Help</span><i>12:11 PM &nbsp; Scott Murray</i></div>
<div class="st">▾ 17_bar_tooltips_div.html — intermediate-d3</div>
<div class="tl" style="left:2px;background:#fc605c"></div><div class="tl" style="left:7px;background:#fdbc40"></div><div class="tl" style="left:12px;background:#34c84a"></div>
<div class="sb">FOLDERS<br>▾ intermediate-d3<br>&nbsp;▾ data<br>&nbsp;&nbsp;.gitignore<br>00_empty_page_template.html<br>01_bar.html<br>02_bar_css_fills.html<br>03_bar_highlights_classed.html<br>04_bar_highlights_filter.html<br>05_bar_loading_bars.html<br>06_bar_loading_axis.html<br>07_bar_loading_highlights.html<br>08_bar_loading_highlights_smooth.html<br>09_bar_mouseover_css.html<br>10_bar_mouseover_js.html<br>11_bar_mouseover_js_filter.html<br>12_bar_tooltips_title.html<br>13_bar_tooltips_g0.html<br>14_bar_tooltips_g1.html<br>15_bar_tooltips_g2.html<br>16_bar_tooltips_g3.html<br><div class="sel">17_bar_tooltips_div.html</div>18_bar_sort1.html<br>19_bar_sort2.html<br>20_bar_two_charts.html<br>21_bar_linked.html<br>22_bar_page.html<br>23_bar_page_side_by_side.html<br>24_pie.html<br>25_ring.html<br>26_stacked_bar.html<br>27_stacked_bar_flipped.html<br>28_area_single.html<br>29_area_stacked.html<br>30_force.html<br>31_map_base.html<br>32_map_choropleth.html<br>33_map_points.html<br>34_map_points_sized.html<br>35_map_zoom_buttons.html<br>36_map_zoom_avars.html<div class="scb"></div></div>
<div class="ed"><div class="tabs"><div class="tab" style="left:4px">15_bar_tooltips_g2.html ×</div><div class="tab" style="left:53px">16_bar_tooltips_g3.html ×</div><div class="tab a" style="left:102px">17_bar_tooltips_div.html ×</div></div>
<div class="code"><span class="n">116</span>         <span class="f">var</span> groups <span class="k">=</span> svg.selectAll(<span class="s">"g"</span>)
<span class="n">117</span>                         .data(dataset)
<span class="n">118</span>                         .enter()
<span class="n">119</span>                         .append(<span class="s">"g"</span>)
<span class="n">120</span>                         .attr(<span class="s">"class"</span>, <span class="s">"bar"</span>)
<span class="n">121</span>                         .attr(<span class="s">"transform"</span>, <span class="f">function</span>(d, i) {
<span class="n">122</span>                             <span class="k">return</span> <span class="s">"translate("</span> <span class="k">+</span> xScale(i) <span class="k">+</span> <span class="s">",0)"</span>;
<span class="n">123</span>                         })
<span class="n">124</span>                         .on(<span class="s">"mouseover"</span>, <span class="f">function</span>(d) {
<span class="n">125</span>
<span class="n">126</span>                             d3.<span class="f">select</span>(this)
<span class="n">127</span>                                 .classed(<span class="s">"highlight"</span>, <span class="m">true</span>);
<span class="n">128</span>
<span class="n">129</span>                             <span class="c">//Position the tooltip &lt;div&gt; and set its content</span>
<span class="n">130</span>                             <span class="f">var</span> x <span class="k">=</span> d3.event.pageX;
<span class="n">131</span>                             <span class="f">var</span> y <span class="k">=</span> d3.event.pageY <span class="k">-</span> <span class="m">40</span>;
<span class="n">132</span>
<span class="n">133</span>                             d3.<span class="f">select</span>(<span class="s">"#tooltip"</span>)
<span class="n">134</span>                                 .style(<span class="s">"left"</span>, x <span class="k">+</span> <span class="s">"px"</span>)
<span class="n">135</span>                                 .style(<span class="s">"top"</span>, y <span class="k">+</span> <span class="s">"px"</span>)
<span class="n">136</span>                                 .style(<span class="s">"opacity"</span>, <span class="m">1</span>)
<span class="n">137</span>                                 .text(d);
<span class="n">138</span>                                 <span class="c">//Note: No need for an anonymous function here,</span>
<span class="n">139</span>                                 <span class="c">//e.g. function(d) {…}, because the data value</span>
<span class="n">140</span>                                 <span class="c">//'d' we want here belongs to the &lt;g&gt; element</span>
<span class="n">141</span>                                 <span class="c">//on which mouseover was triggered, not the</span>
<span class="n">142</span>                                 <span class="c">//tooltip div (which has no data bound to it).</span>
<span class="n">143</span>
<span class="n">144</span>                         })
<span class="n">145</span>                         .on(<span class="s">"mouseout"</span>, <span class="f">function</span>() {
<span class="n">146</span>
<span class="n">147</span>                             d3.<span class="f">select</span>(this)
<span class="n">148</span>                                 .classed(<span class="s">"highlight"</span>, <span class="m">false</span>);
<span class="n">149</span>
<span class="n">150</span>                             <span class="c">//Hide the tooltip</span>
<span class="n">151</span>                             d3.<span class="f">select</span>(<span class="s">"#tooltip"</span>)
<span class="n">152</span>                                 .style(<span class="s">"opacity"</span>, <span class="m">0</span>);
<span class="n">153</span>
<span class="n">154</span>                         });
<span class="n">155</span>
<span class="n">156</span>         <span class="c">//Add bar to each group</span></div>
<div class="mm"><div style="top:3px;left:2px;width:12px"></div><div style="top:8px;left:4px;width:10px"></div><div style="top:20px;left:3px;width:14px"></div><div style="top:40px;left:5px;width:10px"></div><div style="top:60px;left:3px;width:18px"></div><div style="top:80px;left:5px;width:8px"></div><div style="top:100px;left:4px;width:8px"></div></div>
</div>
<div class="stb">5 characters selected</div>
</div></div>

<!-- ============ ROW 3 CELL 3: Sublime JS ============ -->
<div class="cell" style="left:854px;top:481px;width:427px;height:239px">
<div class="scr">
<div class="mb"><b>&#63743;</b><b>Sublime Text 2</b><span>File</span><span>Edit</span><span>Selection</span><span>Find</span><span>View</span><span>Goto</span><span>Tools</span><span>Project</span><span>Window</span><span>Help</span><i>12:14 PM &nbsp; Scott Murray</i></div>
<div class="st">▾ 17_bar_tooltips_div.html — intermediate-d3</div>
<div class="tl" style="left:2px;background:#fc605c"></div><div class="tl" style="left:7px;background:#fdbc40"></div><div class="tl" style="left:12px;background:#34c84a"></div>
<div class="sb">FOLDERS<br>▾ intermediate-d3<br>&nbsp;▾ data<br>&nbsp;&nbsp;.gitignore<br>00_empty_page_template.html<br>01_bar.html<br>02_bar_css_fills.html<br>03_bar_highlights_classed.html<br>04_bar_highlights_filter.html<br>05_bar_loading_bars.html<br>06_bar_loading_axis.html<br>07_bar_loading_highlights.html<br>08_bar_loading_highlights_smooth.html<br>09_bar_mouseover_css.html<br>10_bar_mouseover_js.html<br>11_bar_mouseover_js_filter.html<br>12_bar_tooltips_title.html<br>13_bar_tooltips_g0.html<br>14_bar_tooltips_g1.html<br>15_bar_tooltips_g2.html<br>16_bar_tooltips_g3.html<br><div class="sel">17_bar_tooltips_div.html</div>18_bar_sort1.html<br>19_bar_sort2.html<br>20_bar_two_charts.html<br>21_bar_linked.html<br>22_bar_page.html<br>23_bar_page_side_by_side.html<br>24_pie.html<br>25_ring.html<br>26_stacked_bar.html<br>27_stacked_bar_flipped.html<br>28_area_single.html<br>29_area_stacked.html<br>30_force.html<br>31_map_base.html<br>32_map_choropleth.html<br>33_map_points.html<br>34_map_points_sized.html<br>35_map_zoom_buttons.html<br>36_map_zoom_avars.html<div class="scb"></div></div>
<div class="ed"><div class="tabs"><div class="tab" style="left:4px">15_bar_tooltips_g2.html ×</div><div class="tab" style="left:53px">16_bar_tooltips_g3.html ×</div><div class="tab a" style="left:102px">17_bar_tooltips_div.html ×</div></div>
<div class="code"><span class="n">116</span>         <span class="f">var</span> groups <span class="k">=</span> svg.selectAll(<span class="s">"g"</span>)
<span class="n">117</span>                         .data(dataset)
<span class="n">118</span>                         .enter()
<span class="n">119</span>                         .append(<span class="s">"g"</span>)
<span class="n">120</span>                         .attr(<span class="s">"class"</span>, <span class="s">"bar"</span>)
<span class="n">121</span>                         .attr(<span class="s">"transform"</span>, <span class="f">function</span>(d, i) {
<span class="n">122</span>                             <span class="k">return</span> <span class="s">"translate("</span> <span class="k">+</span> xScale(i) <span class="k">+</span> <span class="s">",0)"</span>;
<span class="n">123</span>                         })
<span class="n">124</span>                         .on(<span class="s">"mouseover"</span>, <span class="f">function</span>(d) {
<span class="n">125</span>
<span class="n">126</span>                             d3.<span class="f">select</span>(this)
<span class="n">127</span>                                 .classed(<span class="s">"highlight"</span>, <span class="m">true</span>);
<span class="n">128</span>
<span class="n">129</span>                             <span class="c">//Position the tooltip &lt;div&gt; and set its content</span>
<span class="n">130</span>                             <span class="f">var</span> x <span class="k">=</span> d3.event.pageX;
<span class="n">131</span>                             <span class="f">var</span> y <span class="k">=</span> d3.event.pageY <span class="k">-</span> <span class="m">40</span>;
<span class="n">132</span>
<span class="n">133</span>                             d3.<span class="f">select</span>(<span class="s">"#tooltip"</span>)
<span class="n">134</span>                                 .style(<span class="s">"left"</span>, x <span class="k">+</span> <span class="s">"px"</span>)
<span class="n">135</span>                                 .style(<span class="s">"top"</span>, y <span class="k">+</span> <span class="s">"px"</span>)
<span class="n">136</span>                                 .style(<span class="s">"opacity"</span>, <span class="m">1</span>)
<span class="n">137</span>                                 .text(d);
<span class="n">138</span>                                 <span class="c">//Note: No need for an anonymous function here,</span>
<span class="n">139</span>                                 <span class="c">//e.g. function(d) {…}, because the data value</span>
<span class="n">140</span>                                 <span class="c">//'d' we want here belongs to the &lt;g&gt; element</span>
<span class="n">141</span>                                 <span class="c">//on which mouseover was triggered, not the</span>
<span class="n">142</span>                                 <span class="c">//tooltip div (which has no data bound to it).</span>
<span class="n">143</span>
<span class="n">144</span>                         })
<span class="n">145</span>                         .on(<span class="s">"mouseout"</span>, <span class="f">function</span>() {
<span class="n">146</span>
<span class="n">147</span>                             d3.<span class="f">select</span>(this)
<span class="n">148</span>                                 .classed(<span class="s">"highlight"</span>, <span class="m">false</span>);
<span class="n">149</span>
<span class="n">150</span>                             <span class="c">//Hide the tooltip</span>
<span class="n">151</span>                             d3.<span class="f">select</span>(<span class="s">"#tooltip"</span>)
<span class="n">152</span>                                 .style(<span class="s">"opacity"</span>, <span class="m">0</span>);
<span class="n">153</span>
<span class="n">154</span>                         });
<span class="n">155</span>
<span class="n">156</span>         <span class="c">//Add bar to each group</span></div>
<div class="mm"><div style="top:3px;left:2px;width:12px"></div><div style="top:8px;left:4px;width:10px"></div><div style="top:20px;left:3px;width:14px"></div><div style="top:40px;left:5px;width:10px"></div><div style="top:60px;left:3px;width:18px"></div><div style="top:80px;left:5px;width:8px"></div><div style="top:100px;left:4px;width:8px"></div></div>
</div>
<div class="stb">4 characters selected</div>
</div></div>

</body></html>
